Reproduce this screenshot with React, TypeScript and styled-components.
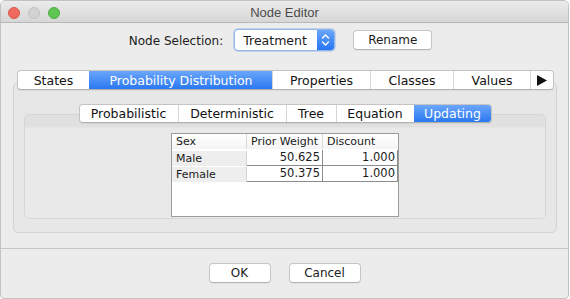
import React from 'react';
import styled, { createGlobalStyle, css } from 'styled-components';

const GlobalStyle = createGlobalStyle`
  html, body {
    margin: 0;
    padding: 0;
    background: #ffffff;
  }
  body {
    font-family: "DejaVu Sans", "Liberation Sans", sans-serif;
    font-size: 12px;
    color: #1b1b1b;
  }
`;

const Window = styled.div`
  box-sizing: border-box;
  width: 569px;
  height: 299px;
  border: 1px solid #c2c2c2;
  border-radius: 5px 5px 4px 4px;
  background: #ececec;
  display: flex;
  flex-direction: column;
  overflow: hidden;
`;

const TitleBar = styled.div`
  height: 21px;
  display: grid;
  grid-template-columns: 1fr auto 1fr;
  align-items: center;
  background: linear-gradient(#ebebeb, #d6d6d6);
  border-bottom: 1px solid #b8b8b8;
`;

const Lights = styled.div`
  display: flex;
  gap: 8px;
  padding-left: 7px;
  padding-top: 2px;
`;

const Light = styled.span<{ $fill: string; $edge: string }>`
  width: 12px;
  height: 12px;
  border-radius: 50%;
  box-sizing: border-box;
  background: ${p => p.$fill};
  border: 1px solid ${p => p.$edge};
`;

const Title = styled.div`
  font-family: "Liberation Sans", sans-serif;
  font-size: 13px;
  color: #4c4c4c;
  padding-top: 1px;
`;

const SelectionRow = styled.div`
  margin-top: 6px;
  height: 22px;
  display: flex;
  align-items: center;
  justify-content: center;
  padding-right: 8px;
`;

const Label = styled.span`
  margin-right: 11px;
  padding-top: 1px;
`;

const Combo = styled.div`
  box-sizing: border-box;
  width: 101px;
  height: 22px;
  display: flex;
  border: 1px solid #93b5ea;
  border-radius: 4px;
  background: #ffffff;
  box-shadow: 0 0 0 1px rgba(120, 165, 235, 0.35);
  margin-right: 18px;
  overflow: hidden;
`;

const ComboText = styled.span`
  flex: 1;
  padding-left: 8px;
  line-height: 21px;
  font-size: 12.5px;
`;

const Stepper = styled.span`
  width: 17px;
  display: flex;
  align-items: center;
  justify-content: center;
  background: linear-gradient(#6aa6fa, #2675f2);
`;

const PushButton = styled.button<{ $w: number }>`
  box-sizing: border-box;
  width: ${p => p.$w}px;
  height: 20px;
  padding: 0;
  font-family: "DejaVu Sans", "Liberation Sans", sans-serif;
  font-size: 12px;
  color: #1b1b1b;
  background: #ffffff;
  border: 1px solid #c6c6c6;
  border-bottom-color: #b4b4b4;
  border-radius: 4px;
  box-shadow: 0 1px 0 rgba(0, 0, 0, 0.04);
`;

const TabFrame = styled.div`
  margin: 19px 11px 0 12px;
  display: flex;
  flex-direction: column;
`;

const TabStrip = styled.div<{ $center?: boolean }>`
  position: relative;
  z-index: 1;
  display: flex;
  box-sizing: border-box;
  align-self: ${p => (p.$center ? 'center' : 'flex-start')};
  border: 1px solid #c4c4c4;
  border-bottom-color: #b2b2b2;
  border-radius: 4px;
  background: #ffffff;
  overflow: hidden;
  box-shadow: 0 1px 1px rgba(0, 0, 0, 0.06);
`;

const Tab = styled.div<{ $w: number; $on?: boolean; $h: number }>`
  box-sizing: border-box;
  width: ${p => p.$w}px;
  height: ${p => p.$h}px;
  display: flex;
  align-items: center;
  justify-content: center;
  font-size: 12.5px;
  color: #111111;
  border-left: 1px solid #d5d5d5;
  &:first-child {
    border-left: none;
  }
  ${p =>
    p.$on &&
    css`
      color: #ffffff;
      border-left-color: transparent;
      background: linear-gradient(#6ba6fa, #2a78f2);
    `}
`;

const MainStrip = styled(TabStrip)`
  margin-left: 4px;
  margin-bottom: -8px;
`;

const MainPanel = styled.div`
  border: 1px solid #d3d3d3;
  border-radius: 5px;
  background: #e7e7e7;
  padding: 21px 10px 13px;
  display: flex;
  flex-direction: column;
`;

const SubStrip = styled(TabStrip)`
  margin-bottom: -9px;
`;

const SubPanel = styled.div`
  border: 1px solid #d6d6d6;
  border-radius: 5px;
  background: linear-gradient(#e0e0e0 0, #e0e0e0 12px, #e9e9e9 13px);
  padding: 18px 0 1px;
  display: flex;
  justify-content: center;
`;

const Table = styled.div`
  box-sizing: border-box;
  width: 228px;
  height: 84px;
  border: 1px solid #9c9c9c;
  background: #ffffff;
  display: grid;
  grid-template-columns: 75px 76px 75px;
  grid-auto-rows: 16px;
  align-content: start;
  font-size: 11px;
`;

const HeadCell = styled.div<{ $last?: boolean }>`
  height: 15px;
  line-height: 15px;
  padding-left: 4px;
  background: linear-gradient(#ffffff, #f4f4f4);
  border-right: ${p => (p.$last ? 'none' : '1px solid #dadada')};
`;

const RowHead = styled.div`
  box-sizing: border-box;
  height: 15px;
  margin-top: 1px;
  line-height: 15px;
  padding-left: 4px;
  background: #eeeeee;
  border-right: 1px solid #d4d4d4;
`;

const DataCell = styled.div`
  box-sizing: border-box;
  text-align: right;
  padding-right: 2px;
  line-height: 15px;
  font-size: 11.5px;
  border-right: 1px solid #8c8c8c;
  border-bottom: 1px solid #8c8c8c;
`;

const Separator = styled.div`
  margin-top: 15px;
  height: 1px;
  background: #c6c6c6;
`;

const Footer = styled.div`
  flex: 1;
  display: flex;
  align-items: center;
  justify-content: center;
  gap: 18px;
  padding-bottom: 1px;
`;

const StepperIcon = () => (
  <svg width="9" height="14" viewBox="0 0 9 14">
    <path d="M1.5 5 L4.5 2 L7.5 5 M1.5 9 L4.5 12 L7.5 9" fill="none" stroke="#ffffff" strokeWidth="1.4" strokeLinecap="round" strokeLinejoin="round" />
  </svg>
);

const ArrowIcon = () => (
  <svg width="10" height="11" viewBox="0 0 10 11">
    <polygon points="0,0 10,5.5 0,11" fill="#111111" />
  </svg>
);

const mainTabs = [
  { label: 'States', w: 71 },
  { label: 'Probability Distribution', w: 183, on: true },
  { label: 'Properties', w: 98 },
  { label: 'Classes', w: 83 },
  { label: 'Values', w: 77 },
];

const subTabs = [
  { label: 'Probabilistic', w: 98 },
  { label: 'Deterministic', w: 108 },
  { label: 'Tree', w: 50 },
  { label: 'Equation', w: 78 },
  { label: 'Updating', w: 77, on: true },
];

const rows = [
  { name: 'Male', weight: '50.625', discount: '1.000' },
  { name: 'Female', weight: '50.375', discount: '1.000' },
];

export default function App() {
  return (
    <>
      <GlobalStyle />
      <Window>
        <TitleBar>
          <Lights>
            <Light $fill="#ee6a5e" $edge="#d9574c" />
            <Light $fill="#d3d3d3" $edge="#c2c2c2" />
            <Light $fill="#5ec453" $edge="#4aae40" />
          </Lights>
          <Title>Node Editor</Title>
          <span />
        </TitleBar>

        <SelectionRow>
          <Label>Node Selection:</Label>
          <Combo>
            <ComboText>Treatment</ComboText>
            <Stepper>
              <StepperIcon />
            </Stepper>
          </Combo>
          <PushButton $w={79}>Rename</PushButton>
        </SelectionRow>

        <TabFrame>
          <MainStrip>
            {mainTabs.map(t => (
              <Tab key={t.label} $w={t.w} $h={18} $on={t.on}>
                {t.label}
              </Tab>
            ))}
            <Tab $w={23} $h={18}>
              <ArrowIcon />
            </Tab>
          </MainStrip>
          <MainPanel>
            <SubStrip $center>
              {subTabs.map(t => (
                <Tab key={t.label} $w={t.w} $h={17} $on={t.on}>
                  {t.label}
                </Tab>
              ))}
            </SubStrip>
            <SubPanel>
              <Table>
                <HeadCell>Sex</HeadCell>
                <HeadCell>Prior Weight</HeadCell>
                <HeadCell $last>Discount</HeadCell>
                {rows.map(r => (
                  <React.Fragment key={r.name}>
                    <RowHead>{r.name}</RowHead>
                    <DataCell>{r.weight}</DataCell>
                    <DataCell>{r.discount}</DataCell>
                  </React.Fragment>
                ))}
              </Table>
            </SubPanel>
          </MainPanel>
        </TabFrame>

        <Separator />
        <Footer>
          <PushButton $w={62}>OK</PushButton>
          <PushButton $w={72}>Cancel</PushButton>
        </Footer>
      </Window>
    </>
  );
}
